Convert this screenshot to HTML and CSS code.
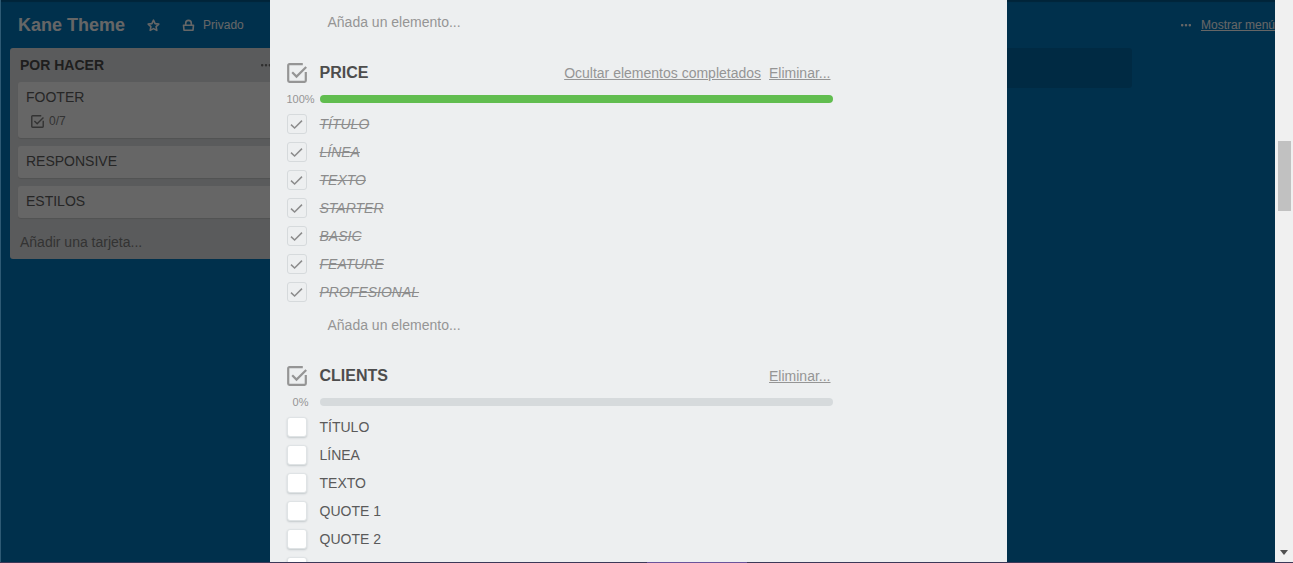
FILE: index.html
```
<!DOCTYPE html>
<html lang="es">
<head>
<meta charset="utf-8">
<title>Kane Theme</title>
<link rel="stylesheet" href="styles.css">
</head>
<body>
<svg class="sprite" aria-hidden="true">
  <symbol id="checklist" viewBox="0 0 20 20"><path d="M15.800 1.200H2.400A1.200 1.200 0 0 0 1.200 2.400v15.200a1.200 1.200 0 0 0 1.200 1.200h15.200a1.200 1.200 0 0 0 1.200-1.200V9M5.200 9.200l4.300 4.400L19.200 4" fill="none" stroke="currentColor" stroke-width="2.2"/></symbol>
  <symbol id="tick" viewBox="0 0 20 20"><path d="M4 10.600l3.600 3.400L15 6.600" fill="none" stroke="currentColor" stroke-width="1.5"/></symbol>
  <symbol id="dots" viewBox="0 0 12 4"><g fill="currentColor"><rect x="1" y="1" width="2.4" height="2.4" rx=".8"/><rect x="4.8" y="1" width="2.4" height="2.4" rx=".8"/><rect x="8.6" y="1" width="2.4" height="2.4" rx=".8"/></g></symbol>
</svg>
<div class="screen">
  <div class="viewport">
    <main class="board">
      <header class="board-header">
        <h1 class="board-name">Kane Theme</h1>
        <button class="head-button star" aria-label="Marcar tablero"><svg width="13" height="13" viewBox="0 0 13 13"><path d="M6.500 1.200l1.600 3.400 3.700.5-2.700 2.600.7 3.700-3.300-1.800-3.300 1.800.7-3.700L1.200 5.100l3.700-.5z" fill="none" stroke="currentColor" stroke-width="1.6" stroke-linejoin="round"/></svg></button>
        <button class="head-button privacy"><svg width="13" height="13" viewBox="0 0 13 13"><path d="M1.500 6.200h10l-.5 5H2zM3.700 6V4.200a2.800 2.800 0 0 1 5.600 0V6" fill="none" stroke="currentColor" stroke-width="1.6" stroke-linejoin="round"/></svg>Privado</button>
        <div class="menu-link"><svg width="12" height="4"><use href="#dots"/></svg><a href="#">Mostrar menú</a></div>
      </header>
      <div class="lists">
        <section class="list">
          <div class="list-header"><h2>POR HACER</h2><button class="list-menu" aria-label="Menú de la lista"><svg width="12" height="4"><use href="#dots"/></svg></button></div>
          <div class="cards">
            <article class="card">FOOTER<div class="badge"><svg width="13" height="13"><use href="#checklist"/></svg>0/7</div></article>
            <article class="card">RESPONSIVE</article>
            <article class="card">ESTILOS</article>
          </div>
          <button class="add-card">Añadir una tarjeta...</button>
        </section>
        <div class="add-list"></div>
      </div>
    </main>
    <div class="overlay">
      <div class="dialog" role="dialog" aria-label="Tarjeta">
        <section class="checklist">
          <ul class="items first-items">
            <li class="item done"><span class="box"><input type="checkbox" checked aria-label="Elemento"></span></li>
          </ul>
          <button class="add-item">Añada un elemento...</button>
        </section>
        <section class="checklist">
          <header class="check-header"><svg width="20" height="20"><use href="#checklist"/></svg><h3>PRICE</h3><a href="#">Ocultar elementos completados</a><a href="#">Eliminar...</a></header>
          <div class="progress"><span class="percent">100%</span><div class="bar"><div class="fill" style="width:100%"></div></div></div>
          <ul class="items">
            <li class="item done"><span class="box"><input type="checkbox" id="p1" checked><svg><use href="#tick"/></svg></span><label for="p1">TÍTULO</label></li>
            <li class="item done"><span class="box"><input type="checkbox" id="p2" checked><svg><use href="#tick"/></svg></span><label for="p2">LÍNEA</label></li>
            <li class="item done"><span class="box"><input type="checkbox" id="p3" checked><svg><use href="#tick"/></svg></span><label for="p3">TEXTO</label></li>
            <li class="item done"><span class="box"><input type="checkbox" id="p4" checked><svg><use href="#tick"/></svg></span><label for="p4">STARTER</label></li>
            <li class="item done"><span class="box"><input type="checkbox" id="p5" checked><svg><use href="#tick"/></svg></span><label for="p5">BASIC</label></li>
            <li class="item done"><span class="box"><input type="checkbox" id="p6" checked><svg><use href="#tick"/></svg></span><label for="p6">FEATURE</label></li>
            <li class="item done"><span class="box"><input type="checkbox" id="p7" checked><svg><use href="#tick"/></svg></span><label for="p7">PROFESIONAL</label></li>
          </ul>
          <button class="add-item">Añada un elemento...</button>
        </section>
        <section class="checklist">
          <header class="check-header"><svg width="20" height="20"><use href="#checklist"/></svg><h3>CLIENTS</h3><a href="#">Eliminar...</a></header>
          <div class="progress"><span class="percent">0%</span><div class="bar"><div class="fill" style="width:0%"></div></div></div>
          <ul class="items">
            <li class="item"><span class="box"><input type="checkbox" id="c1"></span><label for="c1">TÍTULO</label></li>
            <li class="item"><span class="box"><input type="checkbox" id="c2"></span><label for="c2">LÍNEA</label></li>
            <li class="item"><span class="box"><input type="checkbox" id="c3"></span><label for="c3">TEXTO</label></li>
            <li class="item"><span class="box"><input type="checkbox" id="c4"></span><label for="c4">QUOTE 1</label></li>
            <li class="item"><span class="box"><input type="checkbox" id="c5"></span><label for="c5">QUOTE 2</label></li>
            <li class="item"><span class="box"><input type="checkbox" aria-label="Elemento"></span></li>
          </ul>
        </section>
      </div>
    </div>
  </div>
  <div class="scrollbar"><div class="thumb"></div><svg class="arrow" width="8" height="5" viewBox="0 0 8 5"><path d="M0 0h8L4 5z" fill="#505050"/></svg></div>
</div>
<div class="strip"><div class="strip-active"></div></div>
</body>
</html>
```
FILE: styles.css
```
* { box-sizing: border-box; }
body {
  margin: 0;
  height: 100vh;
  display: flex;
  flex-direction: column;
  overflow: hidden;
  font: 14px/18px "Liberation Sans", Arial, sans-serif;
  color: #4d4d4d;
}
h1, h2, h3, ul { margin: 0; padding: 0; }
button { border: 0; padding: 0; background: none; font: inherit; color: inherit; text-align: left; }
a { color: inherit; }
svg { display: block; flex: none; }
.sprite { position: absolute; width: 0; height: 0; }

.screen { flex: 1; min-height: 0; display: flex; }
.viewport {
  position: relative;
  flex: 1;
  min-width: 0;
  overflow: hidden;
  background: #0079bf;
  border-left: 1px solid #2e5a74;
}
.board-header {
  display: flex;
  align-items: center;
  height: 48px;
  padding: 2px 0 0 17px;
  font-size: 12px;
  color: #fff;
  box-shadow: inset 0 2px 1px rgba(0, 0, 0, .25);
}
.board-name { font-size: 18px; line-height: 24px; }
.head-button { display: flex; align-items: center; gap: 8px; }
.star { margin-left: 22px; }
.privacy { margin-left: 22px; }
.menu-link { display: flex; align-items: center; gap: 9px; margin-left: auto; white-space: nowrap; }

.lists {
  display: grid;
  grid-template-columns: repeat(4, 273px);
  gap: 10px;
  align-items: start;
  padding-left: 9px;
}
.list { background: #e2e4e6; border-radius: 3px; padding: 0 8px; }
.list-header { display: flex; align-items: center; height: 34px; padding: 0 3px 0 2px; }
.list-header h2 { flex: 1; font-size: 14px; color: #4d4d4d; }
.list-menu { color: #777; }
.cards { display: grid; gap: 8px; color: #606060; }
.card {
  padding: 6px 8px 8px;
  background: #fff;
  border-radius: 3px;
  box-shadow: 0 1px 1px #ccc;
}
.badge { display: flex; align-items: center; gap: 5px; padding: 6px 5px 0; font-size: 12px; color: #808080; }
.add-card { display: block; padding: 15px 2px 8px; color: #808080; }
.add-list { grid-column: 4; height: 40px; border-radius: 3px; background: #006aa8; }

.overlay {
  position: absolute;
  inset: 0;
  display: flex;
  justify-content: center;
  align-items: flex-start;
  background: rgba(0, 0, 0, .6);
}
.dialog {
  display: grid;
  gap: 23px;
  flex: 0 1 737px;
  min-height: 100%;
  padding: 0 174px 0 17px;
  background: #edeff0;
}
.check-header { display: flex; align-items: center; gap: 8px; height: 22px; padding-right: 2px; color: #959595; }
.check-header h3 { flex: 1; padding-left: 5px; font-size: 16px; color: #4d4d4d; }
.progress { display: flex; align-items: center; height: 16px; margin-top: 7px; }
.percent { width: 28px; margin-right: 5px; font-size: 11px; text-align: center; color: #959595; }
.bar { flex: 1; height: 8px; border-radius: 4px; background: #d6dadc; overflow: hidden; }
.fill { height: 8px; background: #61bd4f; }
.items { list-style: none; padding: 3px 0 1px; }
.first-items { margin-top: -28px; }
.item { display: flex; align-items: center; gap: 13px; height: 28px; color: #5a5a5a; }
.box { display: grid; width: 20px; height: 20px; }
.box input, .box svg { grid-area: 1 / 1; width: 20px; height: 20px; margin: 0; }
.box svg { color: #8c8c8c; pointer-events: none; }
.box input {
  appearance: none;
  border: 1px solid #dfe3e5;
  border-radius: 3px;
  background: #fff;
  box-shadow: 0 1px 2px #c4c9cc;
}
.done .box input { background: #edeff0; border-color: #d6dadc; box-shadow: none; }
.done label { color: #8c8c8c; font-style: italic; text-decoration: line-through; }
.add-item { display: block; height: 35px; padding-left: 41px; color: #959595; }

.scrollbar { display: flex; flex-direction: column; align-items: center; width: 18px; padding: 141px 0 7px; background: #f0f0f0; }
.thumb { width: 13px; height: 70px; background: #c1c1c1; }
.arrow { margin-top: auto; }
.strip { height: 1px; display: flex; justify-content: center; background: #3c3858; padding-left: 100px; }
.strip-active { width: 100px; background: #6b549b; }
```
